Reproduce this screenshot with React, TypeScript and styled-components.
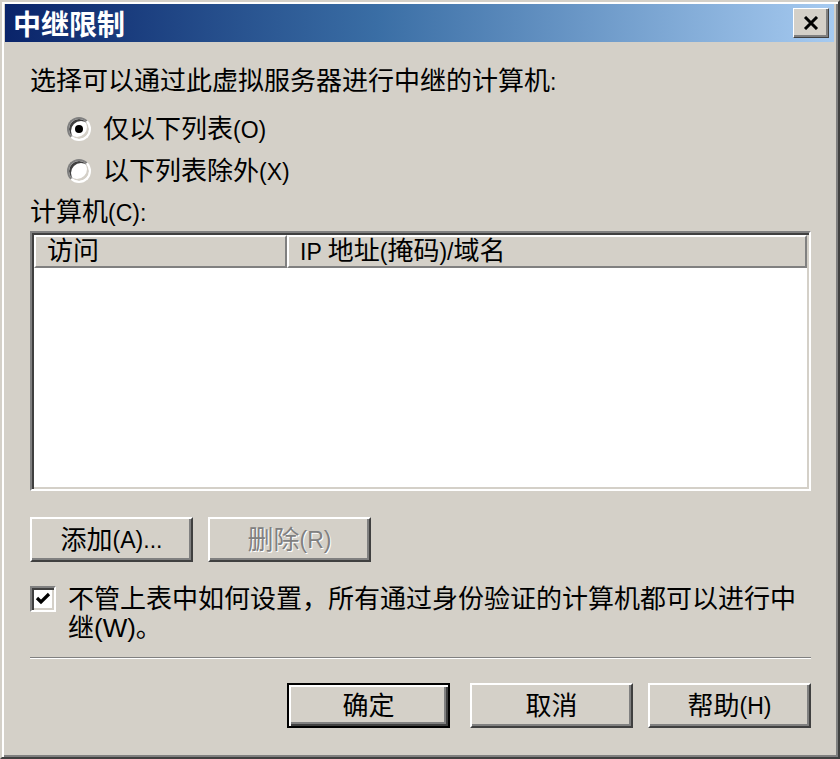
import React from "react";
import styled, { createGlobalStyle } from "styled-components";

const Global = createGlobalStyle`
  html, body {
    margin: 0;
    padding: 0;
    width: 840px;
    height: 759px;
    overflow: hidden;
    background: #d4d0c8;
  }
  * { box-sizing: border-box; }
`;

const FONT = `"Liberation Sans", "Noto Sans CJK SC", sans-serif`;

const Window = styled.div`
  width: 840px;
  height: 759px;
  display: flex;
  flex-direction: column;
  background: #d4d0c8;
  border: 2px solid;
  border-color: #d4d0c8 #404040 #404040 #d4d0c8;
  box-shadow: inset 2px 2px 0 #fff, inset -2px -2px 0 #808080;
  padding: 2px 4px 4px 3px;
  font-family: ${FONT};
  font-size: 26px;
  color: #000;
`;

const TitleBar = styled.div`
  height: 38px;
  flex: none;
  display: flex;
  align-items: center;
  justify-content: space-between;
  padding: 0 5px 0 8px;
  background: linear-gradient(to right, #0a246a 0%, #3a6ea5 45%, #a6caf0 100%);
`;

const Title = styled.span`
  color: #fff;
  font-weight: bold;
  font-size: 28px;
  line-height: 30px;
  font-family: "Noto Sans CJK SC", sans-serif;
`;

const CloseButton = styled.div`
  width: 36px;
  height: 30px;
  display: flex;
  align-items: center;
  justify-content: center;
  background: #d4d0c8;
  border: 1px solid;
  border-color: #fff #404040 #404040 #fff;
  box-shadow: inset -2px -2px 0 #808080;
`;

const Content = styled.div`
  flex: 1;
  display: flex;
  flex-direction: column;
  padding: 0 23px 0 25px;
`;

const Latin = styled.span`
  font-size: 23px;
  line-height: 0;
`;

const Label = styled.div<{ $top: number }>`
  line-height: 30px;
  margin-top: ${(p) => p.$top}px;
  white-space: nowrap;
`;

const RadioGroup = styled.div`
  margin-top: 12px;
  padding-left: 37px;
  display: flex;
  flex-direction: column;
`;

const RadioRow = styled.div`
  height: 42px;
  display: flex;
  align-items: center;
  gap: 12px;
  line-height: 30px;
`;

const RadioCircle = styled.span<{ $checked?: boolean }>`
  width: 24px;
  height: 24px;
  border-radius: 50%;
  background: #fff;
  border: 2px solid;
  border-color: #808080 #fff #fff #808080;
  box-shadow: inset 2px 2px 0 #404040, inset -2px -2px 0 #d4d0c8;
  display: flex;
  align-items: center;
  justify-content: center;
  flex: none;
  &::after {
    content: "";
    width: 8px;
    height: 8px;
    border-radius: 50%;
    background: #000;
    display: ${(p) => (p.$checked ? "block" : "none")};
  }
`;

const ListBox = styled.div`
  margin-top: 4px;
  height: 260px;
  background: #fff;
  border: 2px solid;
  border-color: #808080 #fff #fff #808080;
  box-shadow: inset 2px 2px 0 #404040, inset -2px -2px 0 #d4d0c8;
  padding: 2px;
  display: flex;
  flex-direction: column;
`;

const Header = styled.div`
  height: 33px;
  flex: none;
  display: grid;
  grid-template-columns: 253px 1fr;
`;

const HeaderCell = styled.div`
  background: #d4d0c8;
  border: 2px solid;
  border-color: #fff #808080 #808080 #fff;
  padding-left: 11px;
  line-height: 29px;
  white-space: nowrap;
  overflow: hidden;
`;

const ButtonRow = styled.div<{ $top: number; $end?: boolean }>`
  margin-top: ${(p) => p.$top}px;
  display: flex;
  gap: 15px;
  justify-content: ${(p) => (p.$end ? "flex-end" : "flex-start")};
`;

const Button = styled.div<{ $disabled?: boolean; $default?: boolean }>`
  width: 163px;
  height: 45px;
  display: flex;
  align-items: center;
  justify-content: center;
  background: #d4d0c8;
  border: 2px solid;
  border-color: ${(p) =>
    p.$default ? "#000" : "#fff #404040 #404040 #fff"};
  box-shadow: ${(p) =>
    p.$default
      ? "inset 2px 2px 0 #fff, inset -2px -2px 0 #404040, inset -4px -4px 0 #808080"
      : "inset -2px -2px 0 #808080"};
  margin-right: ${(p) => (p.$default ? "5px" : "0")};
  color: ${(p) => (p.$disabled ? "#808080" : "#000")};
  text-shadow: ${(p) => (p.$disabled ? "1px 1px 0 #fff" : "none")};
  white-space: nowrap;
  line-height: 30px;
`;

const CheckRow = styled.div`
  margin-top: 23px;
  display: flex;
  align-items: flex-start;
  gap: 12px;
`;

const CheckBox = styled.span`
  width: 26px;
  height: 26px;
  margin-top: 1px;
  flex: none;
  background: #fff;
  border: 2px solid;
  border-color: #808080 #fff #fff #808080;
  box-shadow: inset 2px 2px 0 #404040, inset -2px -2px 0 #d4d0c8;
  display: flex;
  align-items: center;
  justify-content: center;
`;

const CheckText = styled.div`
  flex: 1;
  line-height: 29px;
`;

const Separator = styled.div`
  margin-top: 14px;
  height: 2px;
  border-top: 1px solid #808080;
  border-bottom: 1px solid #fff;
`;

export default function App() {
  return (
    <>
      <Global />
      <Window>
        <TitleBar>
          <Title>中继限制</Title>
          <CloseButton>
            <svg width="16" height="14" viewBox="0 0 16 14">
              <path d="M2 1 L14 13 M14 1 L2 13" stroke="#000" strokeWidth="3" />
            </svg>
          </CloseButton>
        </TitleBar>
        <Content>
          <Label $top={24}>
            选择可以通过此虚拟服务器进行中继的计算机<Latin>:</Latin>
          </Label>
          <RadioGroup>
            <RadioRow>
              <RadioCircle $checked />
              <span>
                仅以下列表<Latin>(O)</Latin>
              </span>
            </RadioRow>
            <RadioRow>
              <RadioCircle />
              <span>
                以下列表除外<Latin>(X)</Latin>
              </span>
            </RadioRow>
          </RadioGroup>
          <Label $top={5}>
            计算机<Latin>(C):</Latin>
          </Label>
          <ListBox>
            <Header>
              <HeaderCell>访问</HeaderCell>
              <HeaderCell>
                <Latin>IP </Latin>地址<Latin>(</Latin>掩码<Latin>)/</Latin>域名
              </HeaderCell>
            </Header>
          </ListBox>
          <ButtonRow $top={26}>
            <Button>
              添加<Latin>(A)...</Latin>
            </Button>
            <Button $disabled>
              删除<Latin>(R)</Latin>
            </Button>
          </ButtonRow>
          <CheckRow>
            <CheckBox>
              <svg width="16" height="14" viewBox="0 0 16 14">
                <path d="M2 6 L6 10 L14 2" stroke="#000" strokeWidth="3.2" fill="none" />
              </svg>
            </CheckBox>
            <CheckText>
              不管上表中如何设置，所有通过身份验证的计算机都可以进行中继(W)。
            </CheckText>
          </CheckRow>
          <Separator />
          <ButtonRow $top={24} $end>
            <Button $default>确定</Button>
            <Button>取消</Button>
            <Button>
              帮助<Latin>(H)</Latin>
            </Button>
          </ButtonRow>
        </Content>
      </Window>
    </>
  );
}
